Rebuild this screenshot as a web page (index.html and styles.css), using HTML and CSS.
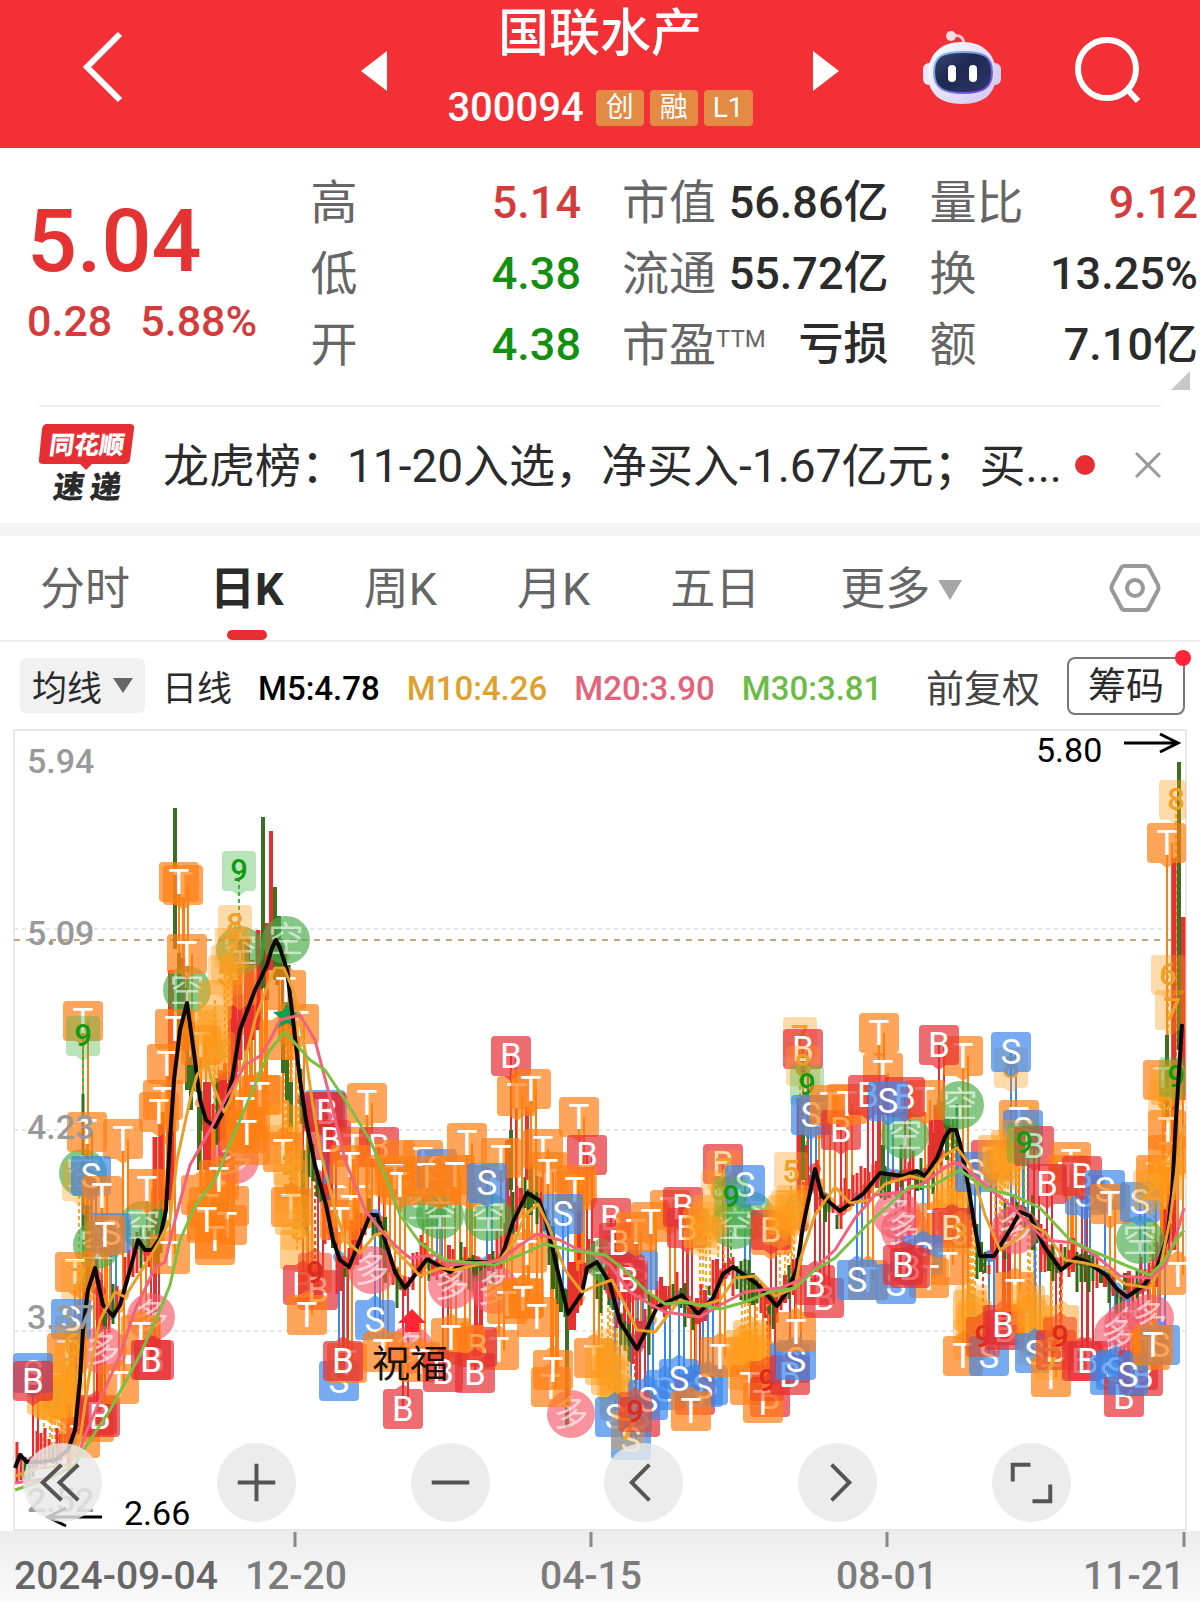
FILE: index.html
```html
<!DOCTYPE html>
<html lang="zh-CN">
<head>
<meta charset="utf-8">
<meta name="viewport" content="width=device-width, initial-scale=1">
<title>国联水产 300094</title>
<link rel="stylesheet" href="styles.css">
</head>
<body>
<header class="topbar">
  <div class="topbar-left">
    <button class="icon-btn" aria-label="返回"><svg width="42" height="70" viewBox="0 0 42 70"><path d="M38 2 5 35l33 33" fill="none" stroke="#fff" stroke-width="6"/></svg></button>
  </div>
  <div class="topbar-main">
    <button class="icon-btn" aria-label="上一只"><svg width="26" height="40" viewBox="0 0 26 40"><path d="M26 0v40L0 20z" fill="#fff"/></svg></button>
    <div class="stock">
      <h1 class="stock-name">国联水产</h1>
      <div class="stock-meta"><span class="stock-code">300094</span><span class="badge">创</span><span class="badge">融</span><span class="badge">L1</span></div>
    </div>
    <button class="icon-btn" aria-label="下一只"><svg width="26" height="40" viewBox="0 0 26 40"><path d="M0 0v40l26-20z" fill="#fff"/></svg></button>
  </div>
  <div class="topbar-right">
    <button class="icon-btn" aria-label="智能助手">
      <svg width="80" height="76" viewBox="0 0 80 76">
        <defs>
          <linearGradient id="shell" x1="0" y1="0" x2="1" y2="1"><stop offset="0" stop-color="#fff"/><stop offset="1" stop-color="#cfc6f2"/></linearGradient>
          <linearGradient id="visor" x1="0" y1="0" x2="1" y2="1"><stop offset="0" stop-color="#3d4a74"/><stop offset=".4" stop-color="#1f2a52"/><stop offset="1" stop-color="#2b3766"/></linearGradient>
          <linearGradient id="rim" x1="0" y1="0" x2="1" y2="1"><stop offset="0" stop-color="#7fd3ee"/><stop offset="1" stop-color="#6a35d8"/></linearGradient>
        </defs>
        <path d="M30 5c8-2 12 2 12 9" fill="none" stroke="#f3c3d2" stroke-width="3"/><circle cx="29" cy="5" r="5" fill="#fbdbe4"/>
        <rect x="1" y="32" width="14" height="22" rx="6" fill="#ece8fb"/><rect x="65" y="32" width="14" height="22" rx="6" fill="#d6cff4"/>
        <path d="M40 11C62 11 74 24 74 43S63 73 40 73 6 62 6 43 18 11 40 11Z" fill="url(#shell)"/>
        <path d="M41 21C62 21 70 25 70 41S61 62 41 62 12 57 12 41 20 21 41 21Z" fill="url(#visor)" stroke="url(#rim)" stroke-width="2"/>
        <rect x="26" y="34" width="8" height="17" rx="4" fill="#fff"/><rect x="47" y="34" width="8" height="17" rx="4" fill="#fff"/>
      </svg>
    </button>
    <button class="icon-btn" aria-label="搜索"><svg width="68" height="68" viewBox="0 0 68 68" fill="none" stroke="#fff" stroke-width="6"><circle cx="33" cy="34" r="29"/><path d="m53 54 11 12"/></svg></button>
  </div>
</header>

<main>
<section class="quote" aria-label="行情">
  <div class="price">
    <div class="price-last">5.04</div>
    <div class="price-change"><span>0.28</span><span>5.88%</span></div>
  </div>
  <dl class="stats">
    <div><dt>高</dt><dd class="up">5.14</dd></div>
    <div><dt>低</dt><dd class="down">4.38</dd></div>
    <div><dt>开</dt><dd class="down">4.38</dd></div>
  </dl>
  <dl class="stats">
    <div><dt>市值</dt><dd>56.86亿</dd></div>
    <div><dt>流通</dt><dd>55.72亿</dd></div>
    <div><dt>市盈<sup>TTM</sup></dt><dd>亏损</dd></div>
  </dl>
  <dl class="stats">
    <div><dt>量比</dt><dd class="up">9.12</dd></div>
    <div><dt>换</dt><dd>13.25%</dd></div>
    <div><dt>额</dt><dd>7.10亿</dd></div>
  </dl>
  <span class="expand"></span>
</section>

<section class="news">
  <svg class="news-logo" width="96" height="90" viewBox="0 -4 96 90">
    <path d="M8 0h83q5 0 4 5l-4 31q-1 4-5 4H53l-6 6-6-6H4q-5 0-4-5L3 5q1-5 5-5z" fill="#e62f33"/>
    <g transform="skewX(-8)" font-weight="900" text-anchor="middle">
      <text x="51" y="30" font-size="25" fill="#fff">同花顺</text>
      <text x="39" y="74" font-size="31" fill="#2b2b2b">速</text>
      <text x="76" y="74" font-size="31" fill="#2b2b2b">递</text>
    </g>
  </svg>
  <a class="news-link" href="#news">龙虎榜：11-20入选，净买入-1.67亿元；买...</a>
  <span class="dot"></span>
  <button class="icon-btn" aria-label="关闭"><svg width="26" height="26" viewBox="0 0 26 26"><path d="m1 1 24 24M25 1 1 25" stroke="#999" stroke-width="3"/></svg></button>
</section>

<nav class="tabs" aria-label="周期">
  <button class="tab">分时</button>
  <button class="tab tab-active">日K</button>
  <button class="tab">周K</button>
  <button class="tab">月K</button>
  <button class="tab">五日</button>
  <button class="tab">更多<svg class="caret" width="24" height="20" viewBox="0 0 24 20"><path d="M0 0h24L12 20z" fill="#a6a6a6"/></svg></button>
  <button class="icon-btn tab-settings" aria-label="设置"><svg width="52" height="50" viewBox="0 0 52 50" fill="none" stroke="#999" stroke-width="4"><path d="M16 3h20q3 0 4 2l9 17q1 3 0 5l-9 17q-1 3-4 3H16q-3 0-4-3L3 27q-1-2 0-5l9-17q1-2 4-2z"/><circle cx="26" cy="25" r="8"/></svg></button>
</nav>

<section class="legend" aria-label="均线指标">
  <button class="legend-pick">均线<svg width="20" height="15" viewBox="0 0 20 15"><path d="M0 0h20L10 15z" fill="#666"/></svg></button>
  <span class="legend-line">日线</span>
  <span class="ma ma5">M5:4.78</span>
  <span class="ma ma10">M10:4.26</span>
  <span class="ma ma20">M20:3.90</span>
  <span class="ma ma30">M30:3.81</span>
  <button class="legend-adjust">前复权</button>
  <button class="legend-chips">筹码<span class="legend-dot"></span></button>
</section>

<section class="chart" aria-label="日K线图">
  <svg id="kline" class="kline" viewBox="0 729 1200 873" role="img" aria-label="K线"></svg>
  <div class="controls">
    <button class="round" aria-label="最早"><svg viewBox="0 0 80 80"><path d="M39 22 20 40l19 18M56 22 37 40l19 18"/></svg></button>
    <button class="round" aria-label="放大"><svg viewBox="0 0 80 80"><path d="M21 40h38M40 21v38"/></svg></button>
    <button class="round" aria-label="缩小"><svg viewBox="0 0 80 80"><path d="M21 40h38"/></svg></button>
    <button class="round" aria-label="左移"><svg viewBox="0 0 80 80"><path d="M46 22 28 40l18 18"/></svg></button>
    <button class="round" aria-label="右移"><svg viewBox="0 0 80 80"><path d="M34 22l18 18-18 18"/></svg></button>
    <button class="round" aria-label="全屏"><svg viewBox="0 0 80 80"><path d="M21 39V22h18M59 42v17H41"/></svg></button>
  </div>
</section>
</main>
<script src="chart.js"></script>
</body>
</html>
```

FILE: styles.css
```css
* { box-sizing: border-box; }

body {
  margin: 0;
  background: #fff;
  color: #2b2b2b;
  font-family: Roboto, "Noto Sans CJK SC", sans-serif;
}

button {
  margin: 0;
  padding: 0;
  border: 0;
  background: none;
  color: inherit;
  font: inherit;
}

svg { display: block; }

/* Top bar */
.topbar {
  display: grid;
  grid-template-columns: 1fr 478px 1fr;
  align-items: center;
  height: 148px;
  background: #f23036;
  color: #fff;
}
.topbar-left { padding: 0 0 12px 82px; }
.topbar-main {
  display: flex;
  align-items: center;
  justify-content: space-between;
  padding-bottom: 8px;
}
.topbar-right {
  display: flex;
  align-items: center;
  justify-content: flex-end;
  gap: 72px;
  padding: 0 58px 12px 0;
}
.stock { text-align: center; }
.stock-name {
  margin: 0;
  font-size: 51px;
  font-weight: 500;
  line-height: 68px;
}
.stock-meta {
  display: flex;
  align-items: center;
  gap: 6px;
  padding-top: 6px;
  line-height: 68px;
}
.stock-code {
  margin-right: 6px;
  font-size: 40px;
  font-weight: 500;
}
.badge {
  min-width: 48px;
  padding: 0 9px;
  border-radius: 4px;
  background: #e38b45;
  font-size: 28px;
  line-height: 36px;
}

/* Quote */
.quote {
  position: relative;
  display: grid;
  grid-template-columns: 242fr 270fr 266fr 268fr;
  column-gap: 41px;
  height: 257px;
  padding: 19px 2px 0 27px;
}
.price {
  color: #e33333;
  font-weight: 500;
  white-space: nowrap;
}
.price-last {
  padding-top: 22px;
  font-size: 88px;
  line-height: 104px;
}
.price-change {
  display: flex;
  gap: 28px;
  color: #d43c3c;
  font-size: 43px;
  line-height: 56px;
}
.stats { margin: 0; }
.stats div {
  display: flex;
  justify-content: space-between;
  height: 71px;
  line-height: 71px;
  white-space: nowrap;
}
.stats dt { color: #666; font-size: 47px; }
.stats dd {
  margin: 0;
  font-size: 45px;
  font-weight: 500;
}
.stats sup {
  font-size: 24px;
  line-height: 24px;
  vertical-align: 14px;
}
.stats .up { color: #d43c3c; }
.stats .down { color: #12900f; }
.expand {
  position: absolute;
  right: 10px;
  bottom: 15px;
  border-style: solid;
  border-width: 0 0 19px 19px;
  border-color: transparent transparent #c8c8c8;
}

/* News */
.news {
  display: flex;
  align-items: center;
  height: 118px;
  margin: 0 39px;
  border-top: 2px solid #f0f0f0;
}
.news-logo { flex: none; }
.news-link {
  flex: 1;
  overflow: hidden;
  margin-left: 28px;
  padding-bottom: 6px;
  color: #2b2b2b;
  font-size: 46px;
  text-decoration: none;
  white-space: nowrap;
}
.dot {
  flex: none;
  width: 20px;
  height: 20px;
  margin: 0 40px 0 10px;
  border-radius: 50%;
  background: #e62f33;
}

/* Period tabs */
.tabs {
  display: flex;
  gap: 80px;
  height: 119px;
  padding: 0 39px 0 40px;
  border-top: 13px solid #f4f4f4;
  border-bottom: 2px solid #ebebeb;
}
.tab {
  position: relative;
  display: flex;
  align-items: center;
  padding-top: 4px;
  color: #666;
  font-size: 45px;
  line-height: 100px;
}
.tab-active { color: #2b2b2b; font-weight: 700; }
.tab-active::after {
  content: "";
  position: absolute;
  bottom: 0;
  left: 50%;
  width: 40px;
  height: 10px;
  margin-left: -20px;
  border-radius: 5px;
  background: #e62f33;
}
.caret { margin-left: 8px; }
.tab-settings { margin-left: auto; }

/* Moving average legend */
.legend {
  display: flex;
  align-items: center;
  height: 87px;
  padding: 0 15px 0 20px;
  font-size: 35px;
  white-space: nowrap;
}
.legend-pick {
  display: flex;
  align-items: center;
  gap: 11px;
  height: 55px;
  margin-right: 17px;
  padding: 0 12px;
  border-radius: 6px;
  background: #f1f1f1;
}
.legend-line { margin-right: 26px; }
.ma {
  margin-right: 27px;
  padding-top: 6px;
  font-size: 33px;
  font-weight: 500;
}
.ma5 { color: #000; }
.ma10 { color: #e0a02c; }
.ma20 { color: #e2647a; }
.ma30 { color: #6cbb48; }
.legend-adjust {
  margin-left: auto;
  color: #444;
  font-size: 38px;
}
.legend-chips {
  position: relative;
  width: 118px;
  height: 58px;
  margin-left: 27px;
  border: 2px solid #777;
  border-radius: 8px;
  font-size: 38px;
  line-height: 54px;
}
.legend-dot {
  position: absolute;
  top: -9px;
  right: -8px;
  width: 16px;
  height: 16px;
  border-radius: 50%;
  background: #ff2436;
}

/* Chart */
.chart { position: relative; }
.kline { width: 100%; height: auto; }
.kline text { font-family: Roboto, "Noto Sans CJK SC", sans-serif; }
.frame { fill: none; stroke: #e8e8e8; stroke-width: 2; }
.grid { stroke: #e6e6e6; stroke-width: 2; stroke-dasharray: 4 4; }
.last-price { stroke: #c4a67c; stroke-width: 2; stroke-dasharray: 6 6; }
.line { fill: none; stroke-width: 3; stroke-linejoin: round; }
.line-ma5 { stroke: #0b0805; stroke-width: 4; }
.line-ma10 { stroke: #e8a02a; }
.line-ma20 { stroke: #f2637a; }
.line-ma30 { stroke: #79c043; }
.level { fill: #999; font-size: 34px; font-weight: 500; }
.extreme { fill: #000; font-size: 34px; }
.arrow { fill: none; stroke: #000; stroke-width: 3; }
.axis { fill: #7c7c7c; font-size: 39px; font-weight: 500; }
.axis-start { fill: #666; }
.tick { stroke: #888; stroke-width: 3; }
.wish { fill: #1a1008; font-size: 38px; }
.mark { font-size: 35px; fill: #fff; text-anchor: middle; }
.mark-num { font-size: 31px; font-weight: 500; text-anchor: middle; }

.controls {
  position: absolute;
  right: 129px;
  bottom: 80px;
  left: 23px;
  display: flex;
  justify-content: space-between;
}
.round {
  width: 79px;
  height: 79px;
  border-radius: 50%;
  background: rgba(232, 232, 232, 0.82);
}
.round svg { width: 100%; fill: none; stroke: #555; stroke-width: 4; }
```

FILE: chart.js
```js
const averages = {
  ma30: '15,1490 50,1478 75,1465 85,1448 110,1410 140,1355 160,1310 170,1285 180,1240 195,1206 215,1180 240,1120 255,1085 270,1050 285,1032 310,1060 325,1070 345,1100 370,1140 385,1175 400,1215 420,1243 445,1260 495,1265 520,1255 545,1244 570,1250 605,1255 625,1270 645,1290 665,1304 685,1302 720,1309 745,1302 770,1292 795,1288 815,1270 835,1258 870,1222 910,1186 930,1187 960,1170 985,1188 1015,1196 1040,1208 1070,1240 1095,1252 1125,1265 1150,1275 1165,1260 1175,1242 1184,1230',
  ma20: '15,1483 50,1478 75,1465 85,1435 100,1400 120,1355 135,1310 155,1268 165,1262 175,1220 190,1165 210,1130 225,1100 245,1065 260,1056 270,1040 280,1020 300,1015 315,1040 328,1090 345,1160 365,1210 385,1235 400,1250 410,1258 435,1255 450,1265 500,1261 520,1245 537,1234 560,1240 575,1248 590,1252 610,1265 630,1292 648,1303 665,1312 700,1317 720,1305 745,1292 780,1288 800,1280 815,1268 835,1250 855,1218 875,1195 905,1192 925,1182 950,1164 960,1163 985,1185 1010,1205 1025,1220 1045,1240 1075,1243 1095,1255 1120,1276 1150,1278 1165,1265 1175,1240 1184,1208',
  ma10: '15,1476 40,1468 70,1465 80,1440 90,1370 100,1320 115,1292 125,1297 145,1265 160,1240 170,1220 177,1160 190,1100 197,1075 207,1062 213,1085 224,1112 233,1095 245,1060 255,1020 268,985 275,968 284,968 295,995 305,1050 312,1100 320,1150 335,1210 345,1240 360,1253 375,1235 385,1232 395,1250 410,1265 420,1276 440,1268 455,1270 480,1264 500,1260 515,1240 525,1215 538,1204 548,1225 565,1270 582,1292 600,1284 612,1280 625,1305 637,1330 655,1332 668,1315 680,1300 700,1306 720,1300 735,1278 755,1276 775,1296 795,1288 800,1260 815,1215 835,1187 850,1203 870,1200 885,1184 910,1176 925,1180 945,1155 957,1148 970,1165 985,1215 1000,1250 1015,1240 1030,1224 1045,1232 1065,1260 1085,1263 1105,1268 1125,1284 1150,1288 1160,1268 1170,1220 1178,1160 1184,1125',
  ma5: '15,1468 20,1455 27,1462 40,1462 55,1460 68,1450 75,1430 80,1380 83,1330 88,1290 95,1268 103,1305 113,1316 120,1305 130,1270 138,1240 145,1250 152,1250 160,1238 166,1210 170,1140 174,1080 180,1030 187,1003 195,1060 200,1100 206,1120 215,1127 224,1110 232,1080 240,1030 255,990 267,965 272,948 276,940 280,948 287,970 293,1020 300,1080 306,1120 315,1165 326,1205 333,1240 340,1260 349,1267 360,1240 370,1215 377,1215 385,1240 395,1272 405,1288 415,1275 427,1259 450,1272 466,1262 500,1262 513,1222 527,1193 539,1200 547,1225 557,1268 568,1314 582,1293 587,1268 597,1262 610,1284 620,1322 637,1349 645,1333 657,1307 682,1295 698,1314 713,1298 723,1274 733,1267 757,1284 777,1306 788,1290 797,1268 803,1226 815,1169 822,1196 840,1211 863,1194 880,1173 903,1176 917,1171 925,1176 937,1158 945,1137 950,1130 956,1130 960,1143 967,1178 974,1222 980,1256 994,1256 1010,1230 1020,1212 1030,1216 1044,1246 1061,1270 1076,1258 1087,1262 1106,1275 1117,1289 1127,1297 1144,1285 1157,1268 1167,1238 1172,1194 1176,1119 1182,1024'
};

// Tall bars: x, high, low, colour, width
const bars = [
  [83, 1094, 1230, 'g', 3], [87, 1205, 1290, 'g', 5], [155, 1137, 1230, 'r', 5], [161, 1110, 1200, 'r', 5],
  [171, 970, 1200, 'r', 6], [175, 808, 949, 'g', 4], [179, 953, 1040, 'g', 4], [183, 958, 1030, 'r', 4],
  [187, 1026, 1090, 'g', 4], [191, 1057, 1110, 'g', 4], [199, 1107, 1170, 'g', 4], [207, 1082, 1170, 'r', 8], [222, 1070, 1170, 'r', 8],
  [231, 1006, 1110, 'r', 6], [235, 980, 1080, 'r', 5], [240, 935, 1060, 'r', 5], [247, 937, 1050, 'r', 6], [252, 960, 1040, 'r', 5],
  [258, 930, 1030, 'r', 5], [263, 817, 988, 'g', 4], [267, 923, 1000, 'r', 4], [271, 831, 970, 'r', 4], [275, 887, 980, 'g', 4],
  [279, 916, 977, 'g', 4], [283, 970, 1073, 'g', 4], [287, 1060, 1100, 'g', 4], [291, 1082, 1127, 'g', 4],
  [303, 1150, 1205, 'g', 5], [305, 1190, 1235, 'g', 6], [507, 1140, 1230, 'r', 4], [511, 1130, 1190, 'g', 4], [527, 1107, 1180, 'r', 4], [531, 1163, 1215, 'g', 4],
  [567, 1290, 1427, 'g', 4], [572, 1262, 1330, 'r', 8], [579, 1190, 1260, 'r', 4],
  [799, 1098, 1210, 'r', 5], [803, 1120, 1180, 'g', 4], [807, 1145, 1195, 'r', 4], [879, 1107, 1180, 'r', 4], [883, 1145, 1190, 'g', 4],
  [931, 1120, 1175, 'r', 5], [936, 1105, 1160, 'r', 5], [942, 1102, 1140, 'r', 5], [947, 1118, 1160, 'g', 4],
  [1167, 1035, 1130, 'g', 4], [1174, 858, 1250, 'r', 5], [1183, 917, 1100, 'r', 5], [1179, 762, 1050, 'g', 4]
];

// Signals, back to front. Letters are trades, 1-8 a running count, g9/r9 its end,
// K/D the short and long calls, a/t a tag hidden by later ones.
const signals = `
K 286 940;K 187 990;K 240 950;K 83 1173;K 143 1225;K 97 1245;D 151 1317;D 103 1350;D 235 1160;K 424 1205;K 440 1215;K 488 1217;
D 452 1285;D 495 1290;D 372 1270;D 410 1350;K 610 1260;K 750 1215;K 735 1225;D 571 1414;K 960 1105;K 905 1135;D 897 1215;D 905 1230;D 1015 1230;
K 1140 1240;D 1128 1325;D 1150 1318;D 1118 1335;
T 187 954;T 183 885;T 179 882;g9 239 871;8 235 925;7 232 948;6 228 965;5 225 975;a 240 985;a 215 1000;a 200 1030;a 214 1060;T 201 1045;a 210 1040;a 214 1025;4 218 1052;
T 175 1029;T 167 1064;T 163 1100;T 159 1112;T 83 1021;g9 83 1036;t 250 1120;t 262 1095;T 260 1095;t 240 1130;T 245 1110;t 250 1145;T 247 1133;T 286 990;T 299 1024;t 279 1040;
T 87 1132;T 123 1139;8 79 1181;S 91 1176;T 102 1196;T 147 1189;S 111 1233;T 105 1235;T 75 1272;7 78 1280;6 72 1335;S 71 1319;T 67 1353;
t 201 1195;t 229 1206;T 209 1207;t 215 1245;T 207 1223;T 227 1225;T 215 1239;T 207 1220;T 170 1254;T 219 1180;
6 72 1345;5 68 1370;a 62 1390;a 55 1400;a 50 1398;a 58 1380;a 44 1395;a 66 1400;4 60 1395;3 52 1400;S 33 1373;B 33 1381;T 80 1438;T 94 1422;B 97 1415;B 100 1417;T 119 1384;T 141 1335;B 154 1360;B 151 1360;
a 285 1125;1 286 1145;T 283 1152;2 290 1165;3 291 1180;4 292 1193;T 291 1207;a 292 1215;5 298 1230;a 297 1250;
S 325 1110;B 323 1112;B 327 1112;T 353 1147;B 331 1140;B 379 1147;T 350 1165;T 367 1103;T 351 1208;t 395 1160;t 385 1175;T 395 1177;T 400 1185;T 340 1220;
B 303 1285;B 318 1290;r9 315 1273;T 307 1315;S 339 1381;T 347 1363;B 343 1361;S 375 1320;T 383 1352;B 403 1409;
T 423 1160;S 437 1169;T 427 1176;t 440 1185;T 467 1143;T 455 1175;t 470 1185;T 501 1158;S 487 1183;T 517 1096;B 511 1056;T 531 1089;T 579 1117;B 587 1155;T 543 1149;T 548 1172;t 577 1185;T 575 1190;S 563 1214;
T 527 1253;T 524 1298;T 507 1304;T 523 1299;T 537 1317;T 499 1350;B 477 1347;t 465 1345;T 451 1338;T 420 1362;B 443 1372;B 475 1373;T 551 1387;T 553 1370;T 594 1358;
B 611 1218;S 638 1270;B 625 1275;B 628 1280;B 619 1243;T 636 1232;T 670 1210;T 651 1222;B 683 1207;B 687 1228;a 700 1228;2 703 1235;a 710 1215;1 706 1222;B 723 1164;7 724 1170;6 718 1190;S 745 1185;g9 731 1197;
a 602 1365;a 608 1375;1 610 1350;2 613 1365;3 614 1380;4 616 1395;a 617 1400;S 615 1417;B 640 1417;S 631 1440;7 628 1430;S 665 1390;S 708 1385;B 695 1395;S 703 1387;S 679 1379;S 648 1400;r9 635 1412;T 691 1411;T 720 1357;
a 742 1350;a 748 1355;a 755 1345;a 745 1370;a 750 1340;a 757 1360;T 750 1385;B 770 1397;T 763 1403;r9 767 1381;S 790 1363;B 790 1375;S 796 1360;T 796 1332;
t 771 1235;B 771 1230;a 785 1215;a 792 1210;4 788 1210;6 794 1205;5 791 1172;a 780 1225;7 800 1037;B 803 1049;8 803 1066;g9 807 1085;T 819 1115;S 811 1115;
T 830 1105;B 841 1130;T 847 1104;T 879 1033;T 883 1073;B 868 1095;T 925 1100;B 905 1097;S 888 1101;T 963 1056;B 939 1045;
T 937 1223;a 950 1210;2 955 1200;B 952 1228;3 960 1235;a 955 1185;T 948 1265;B 824 1298;B 815 1285;T 868 1280;S 857 1280;S 923 1255;T 929 1278;S 896 1284;B 910 1268;B 903 1265;
8 1011 1068;S 1011 1052;T 1019 1120;S 1023 1130;7 1017 1140;B 991 1160;S 975 1172;a 995 1155;a 1000 1165;1 1002 1160;2 1005 1170;a 1008 1150;B 1034 1146;g9 1024 1143;
a 970 1310;a 975 1320;1 972 1305;2 973 1325;3 970 1340;T 963 1356;S 989 1356;r9 983 1337;B 1005 1330;B 1003 1325;T 1015 1292;
a 1028 1305;a 1034 1315;1 1030 1320;a 1036 1335;2 1034 1345;S 1035 1353;T 1051 1377;B 1056 1350;7 1052 1360;a 1062 1325;r9 1060 1337;B 1082 1361;B 1088 1361;
T 1071 1162;S 1085 1195;T 1068 1175;B 1082 1176;B 1047 1184;S 1105 1190;T 1110 1204;T 1156 1175;S 1140 1202;3 1154 1180;2 1150 1190;
S 1110 1375;S 1116 1370;B 1124 1397;B 1138 1370;B 1143 1376;T 1150 1350;S 1160 1345;S 1128 1375;T 1153 1345;
T 1178 1275;T 1168 1155;4 1170 1160;a 1166 1180;T 1168 1130;T 1163 1080;5 1165 1100;a 1168 1085;6 1168 975;7 1172 1010;g9 1176 1077;T 1167 843;8 1176 800`;

const colours = { T: '255,127,20', t: '255,127,20', B: '230,45,50', S: '60,135,235', D: '244,90,105', K: '70,170,70', g9: '60,180,60', r9: '240,70,30' };
const svgNs = 'http://www.w3.org/2000/svg';
const root = document.getElementById('kline');

function add(name, attrs, text) {
  const node = document.createElementNS(svgNs, name);
  for (const key in attrs) node.setAttribute(key, attrs[key]);
  if (text) node.textContent = text;
  root.appendChild(node);
  return node;
}

const ma5 = averages.ma5.split(' ').map(p => p.split(',').map(Number));
function priceAt(x) {
  for (let i = 1; i < ma5.length; i++) {
    const [x0, y0] = ma5[i - 1], [x1, y1] = ma5[i];
    if (x <= x1) return y0 + (y1 - y0) * Math.max(0, x - x0) / (x1 - x0);
  }
  return ma5[ma5.length - 1][1];
}

// Repeatable jitter for the body of each day's bar
let seed = 7;
const jitter = () => (seed = (seed * 16807) % 2147483647) / 2147483647;

// Frame and grid
const shade = add('linearGradient', { id: 'shade', x1: 0, y1: 0, x2: 0, y2: 1 });
shade.innerHTML = '<stop offset="0" stop-color="#ececec"/><stop offset="1" stop-color="#fafafa"/>';
add('rect', { x: 0, y: 1531, width: 1200, height: 71, fill: 'url(#shade)' });
add('path', { class: 'frame', d: 'M14 730H1186V1530H14Z' });
for (const y of [929, 1130, 1331]) add('path', { class: 'grid', d: `M14 ${y}H1186` });
add('path', { class: 'last-price', d: 'M14 940H1186' });

// Stems join each signal to its day
const list = signals.trim().split(/;\s*/).map(s => s.split(' ')).map(([k, x, y]) => [k, +x, +y]);
for (const [kind, x, y] of list) {
  if ('KD'.includes(kind)) continue;
  const end = priceAt(x);
  const rgb = colours[kind] || '255,165,40';
  const thin = colours[kind] && kind.length === 1;
  for (const dx of thin ? [0, 5] : [0]) {
    add('path', { d: `M${x + dx} ${y}V${Math.round(priceAt(x + dx))}`, stroke: `rgb(${rgb})`, 'stroke-width': 2, 'stroke-dasharray': thin ? 'none' : '4 3' });
  }
  if (thin && Math.abs(end - y) > 60) add('circle', { cx: x, cy: Math.round(end), r: 6, fill: `rgba(${rgb},.7)` });
}

// Daily bars
for (let x = 17; x < 1170; x += 4) {
  const y = priceAt(x), rising = priceAt(x + 5) < y;
  const mid = y + (rising ? -1 : 1) * jitter() * 14;
  const half = 4 + jitter() * (Math.abs(priceAt(x + 5) - y) > 8 ? 32 : 18);
  const colour = (rising ? jitter() < .8 : jitter() < .35) ? '#e8302c' : '#2f6b14';
  add('path', { d: `M${x} ${Math.round(mid - half)}V${Math.round(mid + half)}`, stroke: colour, 'stroke-width': jitter() < .2 ? 4 : 3 });
}
for (const [x, high, low, c, w] of bars) {
  add('path', { d: `M${x} ${high}V${low}`, stroke: c === 'r' ? '#e8302c' : '#3b7020', 'stroke-width': w });
}

// Signal tags
for (const [kind, x, y] of list) {
  if ('KD'.includes(kind)) {
    add('circle', { cx: x, cy: y, r: 24, fill: `rgba(${colours[kind]},.66)` });
    add('text', { class: 'mark', x, y: y + 12, opacity: .6 }, kind === 'K' ? '空' : '多');
    continue;
  }
  const count = /\d|a/.test(kind);
  const half = count ? 17 : 20;
  const rgb = colours[kind] || '255,155,25';
  const alpha = kind === 'r9' ? .55 : kind === 'a' ? .5 : count ? .36 : .7;
  const tip = priceAt(x) > y ? `L${x + 7} ${y + 20}L${x} ${y + 25}L${x - 7} ${y + 20}` : '';
  const top = tip ? '' : `L${x - 7} ${y - 20}L${x} ${y - 25}L${x + 7} ${y - 20}`;
  const l = x - half, r = Math.min(x + half, 1186);
  add('path', {
    d: `M${l} ${y - 16}Q${l} ${y - 20} ${l + 4} ${y - 20}${top}L${r - 4} ${y - 20}Q${r} ${y - 20} ${r} ${y - 16}V${y + 16}Q${r} ${y + 20} ${r - 4} ${y + 20}${tip}L${l + 4} ${y + 20}Q${l} ${y + 20} ${l} ${y + 16}Z`,
    fill: `rgba(${rgb},${alpha})`
  });
  if (kind === 'a' || kind === 't') continue;
  const fill = kind === 'g9' ? '#109a10' : kind === 'r9' ? '#dc2a1c' : '#f0a028';
  if (count) add('text', { class: 'mark-num', x, y: y + 10, fill }, kind.slice(-1));
  else add('text', { class: 'mark', x, y: y + 12 }, kind);
}

add('path', { d: 'M287 1002l4 9 10 1-7 6 2 10-9-5-9 5 2-10-7-6 10-1z', fill: '#12a050' });
add('path', { d: 'M412 1309l14 14h-7v9h-14v-9h-7z', fill: '#ff2436' });

for (const key of ['ma5', 'ma10', 'ma20', 'ma30']) add('polyline', { class: `line line-${key}`, points: averages[key] });
add('text', { class: 'wish', x: 372, y: 1377 }, '祝福');

// Price levels and extremes
[['5.94', 773], ['5.09', 945], ['4.23', 1139], ['3.37', 1329], ['2.52', 1512]].forEach(([t, y]) => add('text', { class: 'level', x: 27, y }, t));
add('text', { class: 'extreme', x: 1036, y: 762 }, '5.80');
add('path', { class: 'arrow', d: 'M1124 743H1178M1160 734L1178 743L1160 752' });
add('text', { class: 'extreme', x: 124, y: 1525 }, '2.66');
add('path', { class: 'arrow', d: 'M102 1517H48M66 1508L48 1517L66 1526' });

// Date axis
for (const x of [295, 591, 887, 1184]) add('path', { class: 'tick', d: `M${x} 1532V1547` });
add('text', { class: 'axis axis-start', x: 14, y: 1589 }, '2024-09-04');
add('text', { class: 'axis', x: 296, y: 1589, 'text-anchor': 'middle' }, '12-20');
add('text', { class: 'axis', x: 591, y: 1589, 'text-anchor': 'middle' }, '04-15');
add('text', { class: 'axis', x: 887, y: 1589, 'text-anchor': 'middle' }, '08-01');
add('text', { class: 'axis', x: 1185, y: 1589, 'text-anchor': 'end' }, '11-21');
```
